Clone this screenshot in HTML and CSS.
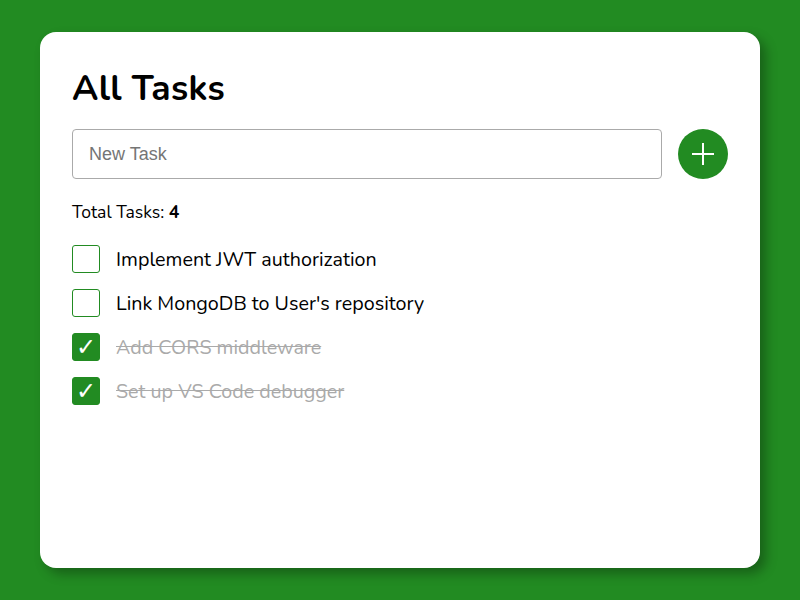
FILE: index.html
```html
<!DOCTYPE html>
<html>
<head>
<meta charset="utf-8">
<link rel="stylesheet" href="styles.css">
</head>
<body>
<div class="card">
  <h1 class="title">All Tasks</h1>
  <div class="new-row">
    <input class="new-input" type="text" placeholder="New Task">
    <button class="add-btn" aria-label="Add">
      <svg width="24" height="24" viewBox="0 0 24 24"><path d="M12 1V23M1 12H23" stroke="#fff" stroke-width="2" fill="none"/></svg>
    </button>
  </div>
  <div class="total">Total Tasks: <b>4</b></div>
  <ul class="tasks">
    <li class="task"><span class="box"></span><span class="label">Implement JWT authorization</span></li>
    <li class="task"><span class="box"></span><span class="label">Link MongoDB to User's repository</span></li>
    <li class="task done"><span class="box">✓</span><span class="label">Add CORS middleware</span></li>
    <li class="task done"><span class="box">✓</span><span class="label">Set up VS Code debugger</span></li>
  </ul>
</div>
</body>
</html>
```
FILE: styles.css
```css
html, body { margin: 0; padding: 0; }
body {
  background: #228b22;
  width: 800px;
  height: 600px;
  font-family: "Nunito", "Lato", "Noto Sans", sans-serif;
  color: #000;
  padding-top: 32px;
  box-sizing: border-box;
}
.card {
  margin: 0 40px;
  height: 536px;
  box-sizing: border-box;
  background: #fff;
  border-radius: 16px;
  padding: 32px;
  box-shadow: 6px 6px 12px rgba(0,0,0,0.3);
}
.title {
  margin: 0;
  font-size: 35.4px;
  font-weight: 700;
  line-height: 48px;
  letter-spacing: 0.3px;
}
.new-row {
  display: flex;
  gap: 16px;
  margin-top: 17px;
  align-items: center;
}
.new-input {
  flex: 1;
  height: 50px;
  box-sizing: border-box;
  border: 1px solid #aaa;
  border-radius: 4px;
  padding: 0 16px;
  font-family: "Liberation Sans", Arial, sans-serif;
  font-size: 18px;
  outline: none;
}
.new-input::placeholder { color: #757575; }
.add-btn {
  width: 50px;
  height: 50px;
  border-radius: 50%;
  border: none;
  background: #228b22;
  padding: 0;
  display: flex;
  align-items: center;
  justify-content: center;
}
.total {
  margin-top: 22px;
  font-size: 17.6px;
  line-height: 22px;
}
.total b { font-weight: 700; }
.tasks {
  list-style: none;
  margin: 22px 0 0;
  padding: 0;
  display: flex;
  flex-direction: column;
  gap: 16px;
}
.task {
  display: flex;
  align-items: center;
  gap: 16px;
  height: 28px;
  font-size: 19.7px;
}
.box {
  width: 28px;
  height: 28px;
  box-sizing: border-box;
  border: 1px solid #228b22;
  border-radius: 3px;
  display: flex;
  align-items: center;
  justify-content: center;
  color: #fff;
  font-size: 24px;
  font-weight: 700;
  font-family: "DejaVu Sans", sans-serif;
}
.done .box { background: #228b22; }
.done .label {
  color: #aaa;
  text-decoration: line-through;
}
```
